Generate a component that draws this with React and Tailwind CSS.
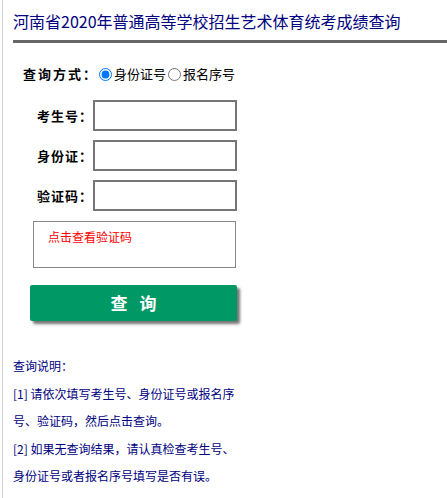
export default function App() {
  return (
    <div
      className="min-h-[498px] w-[447px] bg-white"
      style={{ fontFamily: '"Noto Sans CJK SC", "Liberation Sans", sans-serif' }}
    >
      <div className="ml-[2px] min-h-[498px] border-l border-[#d4d4d4] pl-[10px]">
        <h1 className="pt-[9px] text-[16px] leading-[24px] font-normal text-[#000080]">
          河南省2020年普通高等学校招生艺术体育统考成绩查询
        </h1>
        <div className="mt-[7px] h-[3px] bg-[#666666]" />

        <div className="pt-[21px] pl-[10px] flex items-center text-[13px] leading-[20px] text-black">
          <span className="whitespace-nowrap font-bold tracking-[2px]">查询方式：</span>
          <label className="ml-[1px] flex items-center">
            <input type="radio" name="t" defaultChecked className="m-0 h-[13px] w-[13px]" />
            <span className="ml-[2px]">身份证号</span>
          </label>
          <label className="ml-[2px] flex items-center">
            <input type="radio" name="t" className="m-0 h-[13px] w-[13px]" />
            <span className="ml-[2px]">报名序号</span>
          </label>
        </div>

        <div className="mt-[16px] flex flex-col gap-[9px]">
          {["考生号：", "身份证：", "验证码："].map((l) => (
            <div key={l} className="flex items-center">
              <span className="w-[80px] shrink-0 whitespace-nowrap pl-[24px] text-[13px] font-bold tracking-[1px] text-black">
                {l}
              </span>
              <input type="text" className="h-[31px] w-[144px] border-2 border-[#767676] bg-white" />
            </div>
          ))}
        </div>

        <div className="ml-[20px] mt-[10px] h-[47px] w-[203px] border border-[#888888] pt-[6px] pl-[14px] text-[12px] leading-[18px] text-[#ff0000]">
          点击查看验证码
        </div>

        <button className="ml-[17px] mt-[17px] flex h-[36px] w-[207px] items-center justify-center rounded-[2px] bg-[#009966] text-[17px] font-bold tracking-[12px] text-white shadow-[3px_3px_3px_rgba(0,0,0,0.55)]">
          <span className="pl-[12px]">查询</span>
        </button>

        <div className="mt-[31px] text-[12px] leading-[27.5px] text-[#000080]">
          <p>查询说明：</p>
          <p>[1] 请依次填写考生号、身份证号或报名序</p>
          <p>号、验证码，然后点击查询。</p>
          <p>[2] 如果无查询结果，请认真检查考生号、</p>
          <p>身份证号或者报名序号填写是否有误。</p>
        </div>
      </div>
    </div>
  );
}
